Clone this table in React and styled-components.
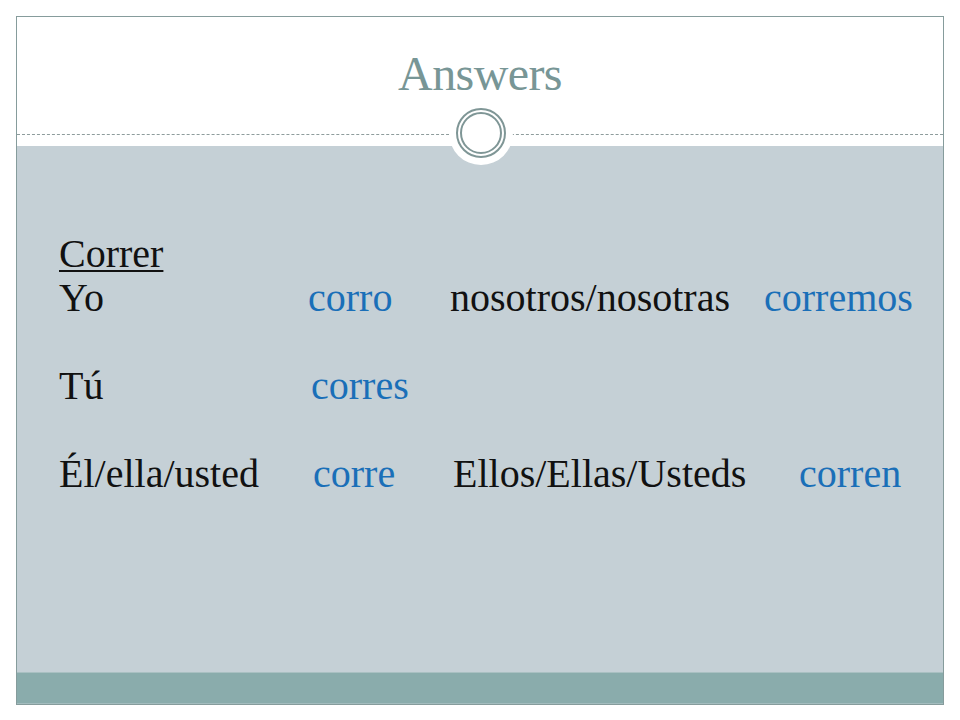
import React from "react";
import styled, { createGlobalStyle } from "styled-components";

const Global = createGlobalStyle`
  html, body { margin: 0; padding: 0; background: #ffffff; }
  body { width: 960px; height: 720px; overflow: hidden; }
`;

const Frame = styled.div`
  position: relative;
  margin: 16px 0 0 16px;
  width: 926px;
  height: 687px;
  border: 1px solid #869c9c;
  display: flex;
  flex-direction: column;
  background: #ffffff;
`;

const Header = styled.header`
  position: relative;
  height: 129px;
  flex: none;
  box-sizing: border-box;
  padding-top: 29px;
  display: flex;
  justify-content: center;
  align-items: flex-start;
`;

const Title = styled.h1`
  margin: 0;
  font-family: "Liberation Serif", serif;
  font-weight: normal;
  font-size: 48px;
  line-height: normal;
  letter-spacing: -0.6px;
  color: #789696;
`;

const Rule = styled.div`
  position: absolute;
  left: 0;
  right: 0;
  top: 117px;
  border-top: 1px dashed #8e9c9c;
`;

const Halo = styled.div`
  position: absolute;
  left: 432px;
  top: 84px;
  width: 64px;
  height: 64px;
  border-radius: 50%;
  background: #ffffff;
  z-index: 2;
  display: flex;
  align-items: center;
  justify-content: center;
`;

const Ring = styled.div`
  box-sizing: border-box;
  width: ${(p) => p.size}px;
  height: ${(p) => p.size}px;
  border-radius: 50%;
  border: 2px solid #7f9696;
  display: flex;
  align-items: center;
  justify-content: center;
`;

const Content = styled.main`
  flex: 1;
  background: #c5d0d6;
  box-sizing: border-box;
  padding: 86px 0 0 42px;
  font-family: "Liberation Serif", serif;
  font-size: 40px;
  line-height: 44px;
  color: #111111;
`;

const Row = styled.div`
  display: grid;
  grid-template-columns: 249px 142px 300px 1fr;
  height: 44px;
  white-space: nowrap;
`;

const Cell = styled.span`
  padding-left: ${(p) => p.shift || 0}px;
  color: ${(p) => (p.answer ? "#1a6fb8" : "#111111")};
`;

const Heading = styled.div`
  height: 44px;
  text-decoration: underline;
  text-underline-offset: 3px;
  text-decoration-thickness: 2px;
`;

const Footer = styled.footer`
  flex: none;
  height: 32px;
  background: #8aacac;
  border-top: 1px solid #a9c0c2;
  border-bottom: 1px solid #a3bcbe;
  box-sizing: border-box;
`;

const rows = [
  ["Yo", "corro", 0, "nosotros/nosotras", 0, "corremos", 14],
  null,
  ["Tú", "corres", 3, "", 0, "", 0],
  null,
  ["Él/ella/usted", "corre", 5, "Ellos/Ellas/Usteds", 3, "corren", 49],
];

export default function App() {
  return (
    <>
      <Global />
      <Frame>
        <Header>
          <Title>Answers</Title>
          <Rule />
          <Halo>
            <Ring size={50}>
              <Ring size={42} />
            </Ring>
          </Halo>
        </Header>
        <Content>
          <Heading>Correr</Heading>
          {rows.map((r, i) =>
            r ? (
              <Row key={i}>
                <Cell>{r[0]}</Cell>
                <Cell answer shift={r[2]}>{r[1]}</Cell>
                <Cell shift={r[4]}>{r[3]}</Cell>
                <Cell answer shift={r[6]}>{r[5]}</Cell>
              </Row>
            ) : (
              <Row key={i} />
            )
          )}
        </Content>
        <Footer />
      </Frame>
    </>
  );
}
